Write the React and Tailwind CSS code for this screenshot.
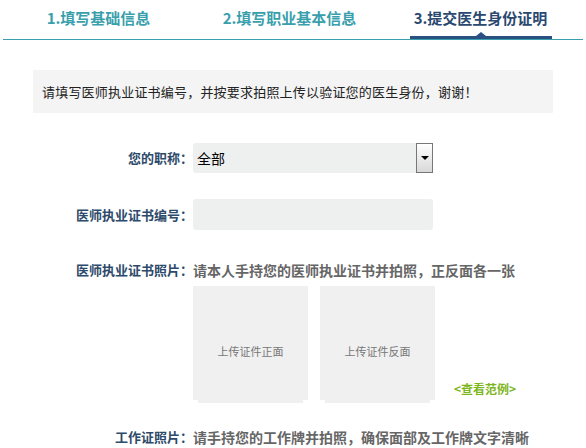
import React from 'react'

const font = { fontFamily: '"Microsoft YaHei", "Noto Sans CJK SC", "Liberation Sans", sans-serif' }

const steps = ['1.填写基础信息', '2.填写职业基本信息', '3.提交医生身份证明']

const Label = ({ children }) => (
  <div className="w-[193px] shrink-0 text-right text-[13px] font-bold text-[#2d4a6a] leading-[20px]">
    {children}
  </div>
)

const UploadBox = ({ text }) => (
  <div className="flex flex-col">
    <div className="w-[115px] h-[114px] bg-[#f0f0f0] flex items-center justify-center pt-[16px] text-[11px] text-[#777]">
      {text}
    </div>
    <div className="mx-[5px] h-[3px] bg-[#f0f0f0]" />
  </div>
)

export default function App() {
  return (
    <div className="w-[586px] h-[448px] bg-white overflow-hidden" style={font}>
      {/* step tabs */}
      <div className="mx-[3px] flex border-b border-[#3a9fac] h-[40px]">
        {steps.map((s, i) => {
          const active = i === 2
          return (
            <div key={s} className="w-[191px] flex flex-col items-center">
              <div
                className={`h-[36px] flex items-center text-[15px] font-bold ${active ? 'text-[#2a4870]' : 'text-[#3a9fac]'}`}
              >
                {s}
              </div>
              {active && (
                <div className="relative w-[142px] h-[3px] bg-[#2a5082]">
                  <div className="absolute left-1/2 -translate-x-1/2 -top-[4px] w-0 h-0 border-l-[5px] border-r-[5px] border-b-[4px] border-l-transparent border-r-transparent border-b-[#2a5082]" />
                </div>
              )}
            </div>
          )
        })}
      </div>

      {/* notice */}
      <div className="mx-[33px] mt-[30px] h-[43px] bg-[#f4f4f4] flex items-center pl-[9px] text-[13px] tracking-[0.2px] text-[#222]">
        请填写医师执业证书编号，并按要求拍照上传以验证您的医生身份，谢谢！
      </div>

      {/* title select */}
      <div className="mt-[30px] flex items-center">
        <Label>您的职称：</Label>
        <div className="w-[240px] h-[30px] bg-[#eeefef] rounded-[3px] flex items-center justify-between">
          <span className="pl-[4px] text-[14px] text-black">全部</span>
          <div className="w-[17px] h-[30px] border border-[#777] bg-gradient-to-b from-white to-[#d8d8d8] flex items-center justify-center">
            <div className="w-0 h-0 border-l-[4px] border-r-[4px] border-t-[4px] border-l-transparent border-r-transparent border-t-black" />
          </div>
        </div>
      </div>

      {/* licence number */}
      <div className="mt-[26px] flex items-center">
        <Label>医师执业证书编号：</Label>
        <div className="w-[240px] h-[31px] bg-[#eeefef] rounded-[3px]" />
      </div>

      {/* licence photos */}
      <div className="mt-[30px] flex">
        <Label>医师执业证书照片：</Label>
        <div className="text-[14px] font-bold text-[#666] leading-[20px]">请本人手持您的医师执业证书并拍照，正反面各一张</div>
      </div>
      <div className="mt-[6px] pl-[193px] flex items-end">
        <UploadBox text="上传证件正面" />
        <div className="ml-[12px]">
          <UploadBox text="上传证件反面" />
        </div>
        <a className="ml-[19px] mb-[5px] text-[12px] font-bold text-[#7cb51c] leading-[18px]">&lt;查看范例&gt;</a>
      </div>

      {/* work card */}
      <div className="mt-[24px] flex">
        <Label>工作证照片：</Label>
        <div className="text-[14px] font-bold text-[#666] leading-[20px]">请手持您的工作牌并拍照，确保面部及工作牌文字清晰</div>
      </div>
    </div>
  )
}
